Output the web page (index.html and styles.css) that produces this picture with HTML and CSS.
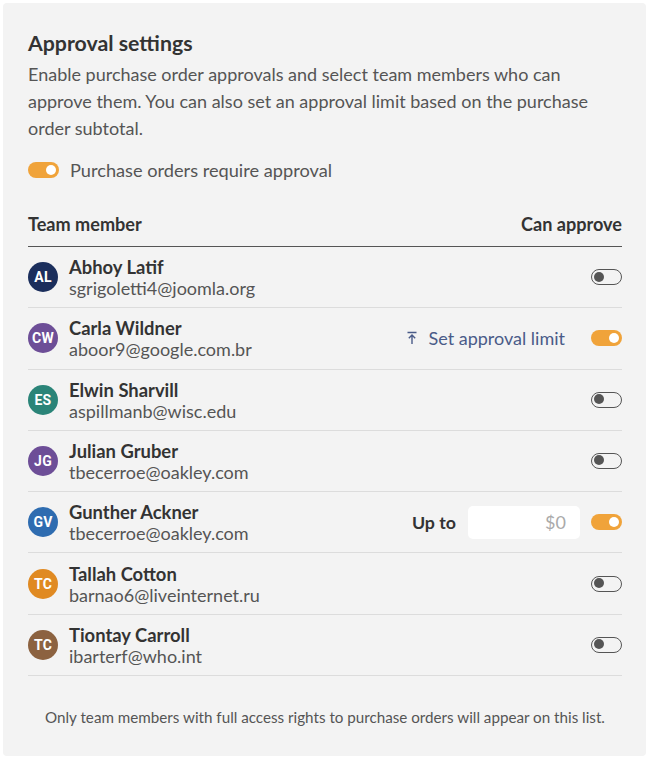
FILE: index.html
```html
<!DOCTYPE html>
<html>
<head>
<meta charset="utf-8">
<link rel="stylesheet" href="styles.css">
</head>
<body>
<div class="card">
  <h1 class="title">Approval settings</h1>
  <p class="desc">Enable purchase order approvals and select team members who can approve them. You can also set an approval limit based on the purchase order subtotal.</p>
  <div class="require">
    <span class="toggle on"></span>
    <span>Purchase orders require approval</span>
  </div>
  <div class="table">
    <div class="thead">
      <span>Team member</span>
      <span>Can approve</span>
    </div>
    <div class="row">
      <span class="avatar navy">AL</span>
      <div class="who"><div class="name">Abhoy Latif</div><div class="email">sgrigoletti4@joomla.org</div></div>
      <div class="actions"><span class="toggle"></span></div>
    </div>
    <div class="row">
      <span class="avatar purple">CW</span>
      <div class="who"><div class="name">Carla Wildner</div><div class="email">aboor9@google.com.br</div></div>
      <div class="actions">
        <span class="limit-link"><svg class="limit-icon" viewBox="0 0 12 14" width="12" height="14"><path d="M1.5 1.5h9M6 4v9M2.8 7.2L6 4l3.2 3.2" fill="none" stroke="currentColor" stroke-width="1.4"/></svg>Set approval limit</span>
        <span class="toggle on"></span>
      </div>
    </div>
    <div class="row">
      <span class="avatar teal">ES</span>
      <div class="who"><div class="name">Elwin Sharvill</div><div class="email">aspillmanb@wisc.edu</div></div>
      <div class="actions"><span class="toggle"></span></div>
    </div>
    <div class="row">
      <span class="avatar purple">JG</span>
      <div class="who"><div class="name">Julian Gruber</div><div class="email">tbecerroe@oakley.com</div></div>
      <div class="actions"><span class="toggle"></span></div>
    </div>
    <div class="row">
      <span class="avatar blue">GV</span>
      <div class="who"><div class="name">Gunther Ackner</div><div class="email">tbecerroe@oakley.com</div></div>
      <div class="actions">
        <span class="upto">Up to</span>
        <span class="amount">$0</span>
        <span class="toggle on"></span>
      </div>
    </div>
    <div class="row">
      <span class="avatar orange">TC</span>
      <div class="who"><div class="name">Tallah Cotton</div><div class="email">barnao6@liveinternet.ru</div></div>
      <div class="actions"><span class="toggle"></span></div>
    </div>
    <div class="row">
      <span class="avatar brown">TC</span>
      <div class="who"><div class="name">Tiontay Carroll</div><div class="email">ibarterf@who.int</div></div>
      <div class="actions"><span class="toggle"></span></div>
    </div>
  </div>
  <p class="note">Only team members with full access rights to purchase orders will appear on this list.</p>
</div>
</body>
</html>
```

FILE: styles.css
```css
html, body {
  margin: 0;
  padding: 0;
  background: #ffffff;
}
body {
  padding: 3px 4px 1px 3px;
  font-family: Lato, "Liberation Sans", sans-serif;
  color: #333333;
}
.card {
  background: #f3f3f3;
  border-radius: 4px;
  padding: 28px 24px 29px 25px;
  min-height: 696px;
}
.title {
  margin: 0;
  font-size: 21.3px;
  line-height: 24px;
  font-weight: 700;
  color: #333333;
}
.desc {
  margin: 6px 0 0;
  max-width: 582px;
  font-size: 18px;
  line-height: 27px;
  color: #555555;
}
.require {
  display: flex;
  align-items: center;
  gap: 11px;
  margin-top: 16px;
  font-size: 18.2px;
  line-height: 24px;
  color: #555555;
}
.toggle {
  box-sizing: border-box;
  display: inline-block;
  position: relative;
  width: 31px;
  height: 16px;
  border-radius: 8px;
  border: 1.5px solid #555555;
  background: transparent;
  flex: none;
}
.toggle::after {
  content: "";
  position: absolute;
  top: 1.5px;
  left: 2px;
  width: 10px;
  height: 10px;
  border-radius: 50%;
  background: #555555;
}
.toggle.on {
  border: none;
  background: #f0a33a;
}
.toggle.on::after {
  top: 3px;
  left: auto;
  right: 3px;
  background: #ffffff;
}
.table {
  margin-top: 31px;
}
.thead {
  display: flex;
  justify-content: space-between;
  font-size: 18.1px;
  line-height: 22px;
  font-weight: 700;
  color: #333333;
  padding-bottom: 11px;
  border-bottom: 1.5px solid #555555;
}
.row {
  display: flex;
  align-items: center;
  gap: 11px;
  padding: 9.15px 0;
  border-bottom: 1px solid #dcdcdc;
}
.avatar {
  width: 30px;
  height: 30px;
  border-radius: 50%;
  flex: none;
  display: flex;
  align-items: center;
  justify-content: center;
  color: #ffffff;
  font-family: Roboto, "Liberation Sans", sans-serif;
  font-weight: 700;
  font-size: 14px;
  letter-spacing: 0.2px;
}
.navy { background: #1b2e5c; }
.purple { background: #6d4e97; }
.teal { background: #2a8478; }
.blue { background: #2e6cb0; }
.orange { background: #e08a22; }
.brown { background: #8c6240; }
.who {
  flex: 1;
  min-width: 0;
}
.name {
  font-size: 18.4px;
  line-height: 22px;
  font-weight: 700;
  color: #333333;
}
.email {
  font-size: 18px;
  line-height: 20px;
  color: #555555;
}
.actions {
  display: flex;
  align-items: center;
}
.limit-link {
  display: flex;
  align-items: center;
  color: #4a5b88;
  font-size: 18px;
  line-height: 22px;
  margin-right: 26px;
}
.limit-icon {
  margin-right: 10px;
}
.upto {
  font-size: 17.8px;
  font-weight: 700;
  color: #333333;
  margin-right: 12px;
}
.amount {
  box-sizing: border-box;
  width: 112px;
  height: 33px;
  background: #ffffff;
  border-radius: 5px;
  color: #aaaaaa;
  font-size: 18px;
  line-height: 33px;
  text-align: right;
  padding-right: 14px;
  margin-right: 11px;
}
.note {
  margin: 31px 0 0;
  text-align: center;
  font-size: 15.2px;
  line-height: 20px;
  color: #555555;
}
```
